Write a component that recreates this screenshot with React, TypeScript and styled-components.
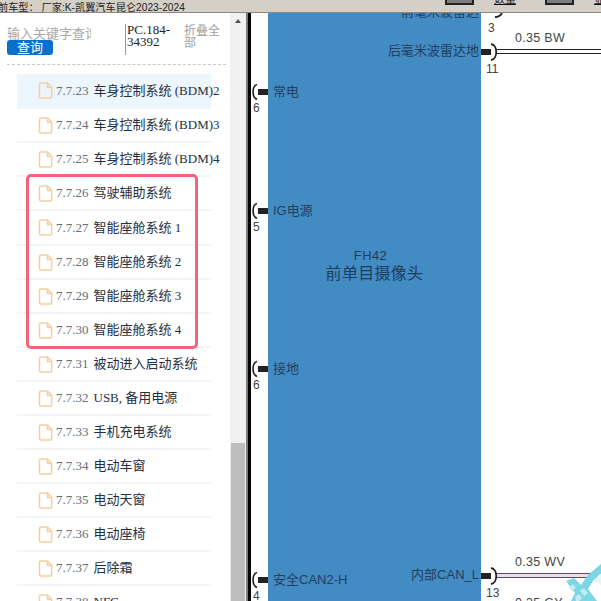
import React from "react";
import styled, { createGlobalStyle } from "styled-components";

const Global = createGlobalStyle`
  html, body { margin: 0; padding: 0; width: 601px; height: 601px; overflow: hidden; background: #fff; }
  #root { width: 601px; height: 601px; }
  * { box-sizing: border-box; }
`;

const CJK = `"Liberation Serif", "Noto Sans CJK SC", serif`;
const SANS = `"Liberation Sans", "Noto Sans CJK SC", sans-serif`;

const Page = styled.div`
  width: 601px;
  height: 601px;
  display: flex;
  flex-direction: column;
  overflow: hidden;
`;

const TopBar = styled.div`
  height: 13px;
  flex: none;
  background: #d4d0c8;
  border-bottom: 1px solid #8a8880;
  display: flex;
  align-items: flex-start;
  overflow: hidden;
`;

const CarInfo = styled.div`
  font: 10.2px/16px ${SANS};
  color: #222;
  white-space: pre;
  margin: 0 0 0 -2px;
  width: 447px;
  flex: none;
`;

const ToolButton = styled.div`
  width: 29px;
  height: 5px;
  flex: none;
  background: #7d7d7d;
  border: 2px solid #222;
  border-top: none;
`;

const ToolLabel = styled.div`
  width: 71px;
  flex: none;
  padding-left: 20px;
  margin-top: -5px;
  height: 9px;
  font: 11px/8px ${SANS};
  color: #111;
  text-decoration: underline;
  white-space: nowrap;
`;

const Body = styled.div`
  flex: 1;
  display: flex;
  min-height: 0;
`;

const Sidebar = styled.div`
  width: 230px;
  flex: none;
  background: #fff;
  overflow: hidden;
  position: relative;
`;

const SearchArea = styled.div`
  height: 51px;
  display: grid;
  grid-template-columns: 118px 59px 46px;
  padding: 11px 0 0 7px;
`;

const SearchCol = styled.div`
  display: flex;
  flex-direction: column;
`;

const Placeholder = styled.div`
  font: 13px/20px ${CJK};
  color: #a9a9a9;
  white-space: nowrap;
  overflow: hidden;
  width: 84px;
  height: 16px;
`;

const QueryButton = styled.div`
  width: 46px;
  height: 15px;
  background: #0a6fc9;
  border-radius: 3px;
  color: #fff;
  font: 13px/15px ${SANS};
  text-align: center;
`;

const CodeBox = styled.div`
  border-left: 1px solid #999;
  height: 31px;
  padding-left: 1px;
  font: 13px/12px ${CJK};
  color: #222;
`;

const Collapse = styled.div`
  font: 12px/12px ${SANS};
  color: #a0a0a0;
  width: 36px;
  padding-top: 1px;
`;

const DashedRule = styled.div`
  height: 1px;
  margin: 0 4px 0 7px;
  border-top: 1px dashed #c9c9c9;
`;

const List = styled.div`
  margin: 9px 0 0 17px;
  width: 194px;
`;

const Row = styled.div<{ $active?: boolean; $tall?: boolean }>`
  height: ${(p) => (p.$tall ? 35 : 34)}px;
  padding-left: 21px;
  display: flex;
  align-items: center;
  gap: 3px;
  background: ${(p) => (p.$active ? "#edf6fd" : "transparent")};
  border-bottom: 2px solid ${(p) => (p.$active ? "transparent" : "#f5f5f5")};
  white-space: nowrap;
`;

const RowNum = styled.span`
  font: 13px/16px "Liberation Serif", serif;
  color: #666e78;
`;

const RowTitle = styled.span`
  font: 13px/16px ${CJK};
  color: #25303f;
  margin-left: 2px;
`;

const Highlight = styled.div`
  position: absolute;
  left: 26px;
  top: 161px;
  width: 172px;
  height: 175px;
  border: 3px solid #f2647a;
  border-radius: 5px;
  pointer-events: none;
`;

const Scrollbar = styled.div`
  width: 16px;
  flex: none;
  background: #f1f1f1;
  padding: 0 1px;
`;

const ScrollArrow = styled.div`
  width: 0;
  height: 0;
  margin: 6px auto 0;
  border-left: 3.5px solid transparent;
  border-right: 3.5px solid transparent;
  border-bottom: 4px solid #505050;
`;

const ScrollThumb = styled.div`
  height: 158px;
  margin-top: 420px;
  background: #bdbdbd;
`;

const Divider = styled.div`
  width: 2px;
  flex: none;
  background: #7a7a7a;
`;

const Diagram = styled.div`
  flex: 1;
  position: relative;
  border-left: 3px solid #000;
  background: #fff;
  display: flex;
  overflow: hidden;
  padding-left: 17px;
`;

const Module = styled.div`
  width: 213px;
  height: 100%;
  flex: none;
  background: #438bc3;
  display: flex;
  flex-direction: column;
  align-items: center;
  padding-top: 236px;
  color: #1f3c5e;
`;

const ModuleCode = styled.div`
  font: 13px/14px ${SANS};
  letter-spacing: 0.4px;
  margin-right: 8px;
`;

const ModuleName = styled.div`
  font: 16px/21px ${SANS};
  letter-spacing: 0.3px;
`;

const Connector = styled.svg<{ $top: number; $left: number }>`
  position: absolute;
  top: ${(p) => p.$top}px;
  left: ${(p) => p.$left}px;
`;

const PinLabel = styled.div<{ $top: number; $left?: number; $right?: number }>`
  position: absolute;
  top: ${(p) => p.$top}px;
  ${(p) => (p.$left !== undefined ? `left: ${p.$left}px;` : "")}
  ${(p) => (p.$right !== undefined ? `right: ${p.$right}px;` : "")}
  font: 13px/14px ${SANS};
  color: #21405f;
  white-space: nowrap;
`;

const PinNumber = styled.div<{ $top: number; $left: number }>`
  position: absolute;
  top: ${(p) => p.$top}px;
  left: ${(p) => p.$left}px;
  font: 12px/14px ${SANS};
  color: #444;
`;

const WireLabel = styled.div<{ $top: number }>`
  position: absolute;
  top: ${(p) => p.$top}px;
  left: 264px;
  font: 12.5px/14px ${SANS};
  color: #444;
  letter-spacing: 0.3px;
`;

const Wire = styled.div<{ $top: number; $inner: string; $edge: string }>`
  position: absolute;
  top: ${(p) => p.$top}px;
  left: 246px;
  right: 0;
  height: 5px;
  background: ${(p) => p.$inner};
  border-top: 1px solid ${(p) => p.$edge};
  border-bottom: 1px solid ${(p) => p.$edge};
`;

const Watermark = styled.svg`
  position: absolute;
  right: 0;
  bottom: 0;
`;

const LeftPin = ({ top, label, num }: { top: number; label: string; num: string }) => (
  <>
    <Connector $top={top - 9} $left={0} width="17" height="18" viewBox="0 0 17 18">
      <path d="M6 1.5 C1 3 0.5 14 6 16.5" fill="none" stroke="#222" strokeWidth="1.6" />
      <rect x="7" y="6" width="10" height="6" fill="#222" />
    </Connector>
    <PinLabel $top={top - 7} $left={22}>{label}</PinLabel>
    <PinNumber $top={top + 9} $left={2}>{num}</PinNumber>
  </>
);

const RightPin = ({ top, label, num }: { top: number; label: string; num: string }) => (
  <>
    <Connector $top={top - 9} $left={230} width="18" height="18" viewBox="0 0 18 18">
      <rect x="0" y="6" width="10" height="6" fill="#222" />
      <path d="M10 1 C17 2 17 16 10 17" fill="none" stroke="#222" strokeWidth="1.8" />
    </Connector>
    <PinLabel $top={top - 8} $right={122}>{label}</PinLabel>
    <PinNumber $top={top + 10} $left={235}>{num}</PinNumber>
  </>
);

const FileIcon = () => (
  <svg width="15" height="17" viewBox="0 0 15 17" style={{ flex: "none" }}>
    <path
      d="M1.5 2.5 Q1.5 1 3 1 H9.5 L13.7 5.5 V14.5 Q13.7 16 12.2 16 H3 Q1.5 16 1.5 14.5 Z M9.5 1 V5.5 H13.7"
      fill="none"
      stroke="#f6cf9f"
      strokeWidth="1.5"
    />
  </svg>
);

const rows: [string, string][] = [
  ["7.7.23", "车身控制系统 (BDM)2"],
  ["7.7.24", "车身控制系统 (BDM)3"],
  ["7.7.25", "车身控制系统 (BDM)4"],
  ["7.7.26", "驾驶辅助系统"],
  ["7.7.27", "智能座舱系统 1"],
  ["7.7.28", "智能座舱系统 2"],
  ["7.7.29", "智能座舱系统 3"],
  ["7.7.30", "智能座舱系统 4"],
  ["7.7.31", "被动进入启动系统"],
  ["7.7.32", "USB, 备用电源"],
  ["7.7.33", "手机充电系统"],
  ["7.7.34", "电动车窗"],
  ["7.7.35", "电动天窗"],
  ["7.7.36", "电动座椅"],
  ["7.7.37", "后除霜"],
  ["7.7.38", "NFC"],
];

export default function App() {
  return (
    <Page>
      <Global />
      <TopBar>
        <CarInfo>{"前车型： 厂家:K-凯翼汽车昆仑2023-2024"}</CarInfo>
        <ToolButton />
        <ToolLabel>数量</ToolLabel>
        <ToolButton />
        <ToolLabel>显示</ToolLabel>
      </TopBar>
      <Body>
        <Sidebar>
          <SearchArea>
            <SearchCol>
              <Placeholder>输入关键字查询</Placeholder>
              <QueryButton>查询</QueryButton>
            </SearchCol>
            <CodeBox>PC.184-34392</CodeBox>
            <Collapse>折叠全部</Collapse>
          </SearchArea>
          <DashedRule />
          <List>
            {rows.map(([n, t], i) => (
              <Row key={n} $active={i === 0} $tall={i === 0 || i === 4}>
                <FileIcon />
                <RowNum>{n}</RowNum>
                <RowTitle>{t}</RowTitle>
              </Row>
            ))}
          </List>
          <Highlight />
        </Sidebar>
        <Scrollbar>
          <ScrollArrow />
          <ScrollThumb />
        </Scrollbar>
        <Divider />
        <Diagram>
          <Module>
            <ModuleCode>FH42</ModuleCode>
            <ModuleName>前单目摄像头</ModuleName>
          </Module>
          <Wire $top={36} $inner="#fff" $edge="#222" />
          <Wire $top={560} $inner="#e8e0ea" $edge="#5a4a63" />
          <Watermark width="50" height="50" viewBox="0 0 50 50">
            <path d="M15 30 L23 27 L30 34 L37 24 L50 13 V22 L42 30 L37 38 L46 50 H20 L24 42 Z" fill="#7dd6e4" />
            <path d="M18 36 L22 33 L25 37 L21 40 Z M29 40 L33 37 L37 42 L33 45 Z M24 46 L28 43 L31 47 L28 50 H25 Z" fill="#c4ebf0" />
            <path d="M42 30 L50 22 V34 Z" fill="#e3f6f8" />
          </Watermark>
          <RightPin top={39} label="后毫米波雷达地" num="11" />
          <PinNumber $top={8} $left={237}>3</PinNumber>
          <Connector $top={0} $left={244} width="12" height="6" viewBox="0 0 12 6">
            <path d="M0 4 C3 4 6 2 7 0" fill="none" stroke="#222" strokeWidth="1.8" />
          </Connector>
          <PinLabel $top={-8} $right={122}>前毫米波雷达</PinLabel>
          <WireLabel $top={18}>0.35 BW</WireLabel>
          <LeftPin top={79} label="常电" num="6" />
          <LeftPin top={198} label="IG电源" num="5" />
          <LeftPin top={356} label="接地" num="6" />
          <LeftPin top={567} label="安全CAN2-H" num="4" />
          <RightPin top={563} label="内部CAN_L" num="13" />
          <WireLabel $top={542}>0.35 WV</WireLabel>
          <WireLabel $top={583}>0.35 GY</WireLabel>
        </Diagram>
      </Body>
    </Page>
  );
}
